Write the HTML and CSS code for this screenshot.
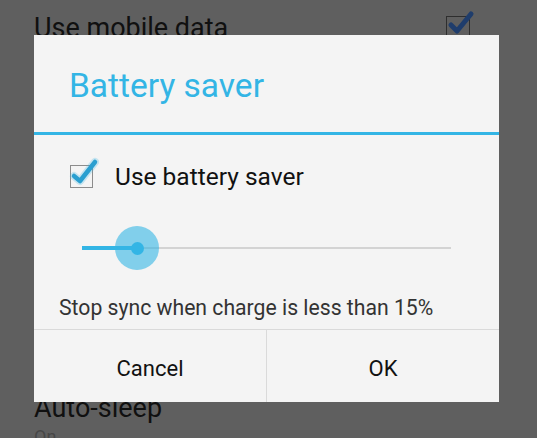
FILE: index.html
```html
<!DOCTYPE html>
<html lang="en">
<head>
    <meta charset="UTF-8">
    <title>Battery saver</title>
    <link rel="stylesheet" href="styles.css">
</head>
<body>
    <div class="screen">
        <ul class="prefs">
            <li class="pref">
                <span class="pref-title">Use mobile data</span>
                <span class="bg-check">
                    <svg width="32" height="32" viewBox="0 0 32 32">
                        <path d="M7 17 L13 23 L27 6" fill="none" stroke="#1f3d6c" stroke-width="5" stroke-linecap="round" stroke-linejoin="round"/>
                    </svg>
                </span>
            </li>
            <li class="pref pref-hidden"></li>
            <li class="pref pref-two">
                <span class="pref-title">Auto-sleep</span>
                <span class="pref-sub">On</span>
            </li>
        </ul>

        <div class="dialog">
            <div class="dialog-title">Battery saver</div>
            <div class="dialog-body">
                <label class="check-row">
                    <span class="check">
                        <svg width="32" height="32" viewBox="0 0 32 32">
                            <path d="M7 19 L13 24 L28 5" fill="none" stroke="#33b5e5" stroke-width="8" stroke-opacity="0.25" stroke-linecap="round" stroke-linejoin="round"/>
                            <path d="M7 19 L13 24 L28 5" fill="none" stroke="#2a9fd0" stroke-width="4.5" stroke-linecap="round" stroke-linejoin="round"/>
                        </svg>
                    </span>
                    <span class="check-label">Use battery saver</span>
                </label>
                <div class="slider">
                    <div class="track-fill"></div>
                    <div class="track-rest"></div>
                    <div class="knob"><span class="knob-dot"></span></div>
                </div>
                <p class="message">Stop sync when charge is less than 15%</p>
            </div>
            <div class="buttons">
                <button class="btn">Cancel</button>
                <button class="btn">OK</button>
            </div>
        </div>
    </div>
</body>
</html>
```

FILE: styles.css
```css
body, ul, li, p {
    margin: 0;
    padding: 0;
}
body {
    background-color: #5f5f5f;
    font-family: Roboto, "Noto Sans", sans-serif;
}
.screen {
    width: 537px;
    height: 438px;
    overflow: hidden;
    position: relative;
}
.prefs {
    list-style: none;
    padding: 0 67px 0 34px;
}
.pref {
    display: flex;
    align-items: center;
    justify-content: space-between;
    height: 55px;
}
.pref-title {
    font-size: 27px;
    color: #101010;
}
.bg-check {
    width: 22px;
    height: 22px;
    border: 1px solid #2e2e2e;
    position: relative;
}
.bg-check svg {
    position: absolute;
    left: -3px;
    top: -9px;
}
.pref-hidden {
    height: 339px;
}
.pref-two {
    flex-direction: column;
    align-items: flex-start;
    justify-content: flex-start;
    height: auto;
}
.pref-two .pref-title {
    line-height: 28px;
}
.pref-sub {
    font-size: 18px;
    color: #474747;
    line-height: 24px;
    margin-top: 3px;
}

/* dialog over the list */
.dialog {
    position: absolute;
    left: 34px;
    top: 35px;
    width: 465px;
    height: 367px;
    background-color: #f4f4f4;
    display: flex;
    flex-direction: column;
}
.dialog-title {
    height: 100px;
    box-sizing: border-box;
    border-bottom: 3px solid #33b5e5;
    padding: 3px 35px 0;
    display: flex;
    align-items: center;
    font-size: 33.5px;
    color: #33b5e5;
}
.dialog-body {
    flex: 1;
    padding: 29px 0 0 25px;
}
.check-row {
    display: flex;
    align-items: center;
    height: 24px;
}
.check {
    width: 21px;
    height: 21px;
    margin-left: 11px;
    border: 1.5px solid #8c8c8c;
    position: relative;
    flex-shrink: 0;
}
.check svg {
    position: absolute;
    left: -4px;
    top: -9px;
}
.check-label {
    margin-left: 22px;
    font-size: 24.5px;
    color: #111;
}
.slider {
    position: relative;
    display: flex;
    align-items: center;
    height: 44px;
    width: 369px;
    margin: 38px 0 0 23px;
}
.track-fill {
    width: 55px;
    height: 4px;
    background-color: #33b5e5;
}
.track-rest {
    flex: 1;
    height: 2px;
    background-color: #d3d3d3;
}
.knob {
    position: absolute;
    left: 33px;
    top: 0;
    width: 44px;
    height: 44px;
    border-radius: 50%;
    background-color: rgba(51, 181, 229, 0.6);
    display: flex;
    align-items: center;
    justify-content: center;
}
.knob-dot {
    width: 13px;
    height: 13px;
    border-radius: 50%;
    background-color: #33b5e5;
}
.message {
    margin-top: 25px;
    font-size: 21.2px;
    color: #333;
}
.buttons {
    display: flex;
    height: 72px;
    border-top: 1px solid #dadada;
}
.btn {
    flex: 1;
    border: none;
    background: none;
    font-family: Roboto, "Noto Sans", sans-serif;
    font-size: 22px;
    color: #111;
    padding: 5px 0 0;
}
.btn + .btn {
    border-left: 1px solid #dadada;
}
```
